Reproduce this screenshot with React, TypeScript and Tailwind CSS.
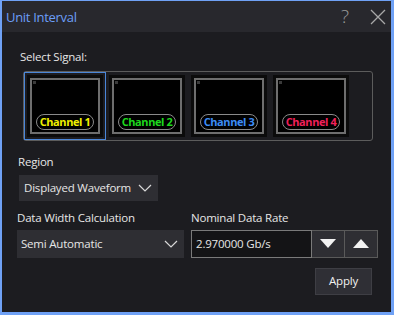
import React from 'react';

const channels = [
  { name: 'Channel 1', color: 'text-[#f0f000]' },
  { name: 'Channel 2', color: 'text-[#1ed81e]' },
  { name: 'Channel 3', color: 'text-[#3d8cf5]' },
  { name: 'Channel 4', color: 'text-[#f0205a]' },
];

function Chevron({ className }: { className?: string }) {
  return (
    <svg width="14" height="8" viewBox="0 0 14 8" className={className}>
      <path d="M1 1 L7 7 L13 1" fill="none" stroke="#d8d8d8" strokeWidth="1.2" />
    </svg>
  );
}

function Tile({ name, color, selected }: { name: string; color: string; selected?: boolean }) {
  return (
    <div className={`w-[82px] h-[68px] p-[2px] border shrink-0 ${selected ? 'border-[#4a86d8]' : 'border-transparent'}`}>
      <div className="w-full h-full bg-[#0b0b0b] p-[3px]">
        <div className="relative w-full h-full bg-black border-2 border-[#6e6e6e] flex flex-col justify-end items-center pb-[2px]">
          <div className="absolute left-[1px] top-[1px] w-[3px] h-[3px] bg-[#3a3a3a]" />
          <div className={`h-[16px] px-[3px] rounded-full border-[1.5px] border-[#8a8a8a] bg-black flex items-center whitespace-nowrap text-[11px] tracking-[-0.4px] font-bold leading-none ${color}`}>
            {name}
          </div>
        </div>
      </div>
    </div>
  );
}

export default function App() {
  return (
    <div
      className="w-[394px] h-[315px] bg-[#1c1c20] border-t border-l-2 border-r-[3px] border-b-[3px] border-[#6fa1f5] flex flex-col text-[#e6e6e6] whitespace-nowrap"
      style={{ fontFamily: '"Open Sans", "Noto Sans", sans-serif' }}
    >
      {/* title bar */}
      <div className="h-[31px] bg-[#28282d] flex items-center pl-[4px] pr-[5px] shrink-0">
        <span className="text-[13px] text-[#6c9ef8] tracking-[-0.3px] mt-[2px]">Unit Interval</span>
        <span className="ml-auto text-[19px] font-light text-[#9a9a9a] leading-none mr-[21px]">?</span>
        <svg width="16" height="16" viewBox="0 0 16 16">
          <path d="M1 1 L15 15 M15 1 L1 15" stroke="#a8a8a8" strokeWidth="1.3" />
        </svg>
      </div>

      <div className="flex flex-col text-[11.5px] tracking-[-0.2px] leading-none">
        <div className="ml-[18px] mt-[19px]">Select Signal:</div>

        <div className="ml-[21px] mt-[8px] w-[350px] h-[70px] border border-[#5c5c5c] rounded-[3px] flex">
          {channels.map((c, i) => (
            <Tile key={c.name} name={c.name} color={c.color} selected={i === 0} />
          ))}
        </div>

        <div className="ml-[16px] mt-[15px]">Region</div>
        <div className="ml-[17px] mt-[8px] w-[139px] h-[26px] bg-[#2e2e33] flex items-center pl-[5px] pr-[6px]">
          <span>Displayed Waveform</span>
          <Chevron className="ml-auto shrink-0" />
        </div>

        <div className="flex mt-[11px] ml-[15px]">
          <div className="flex flex-col">
            <div>Data Width Calculation</div>
            <div className="mt-[6px] w-[167px] h-[28px] bg-[#2e2e33] flex items-center pl-[4px] pr-[6px]">
              <span>Semi Automatic</span>
              <Chevron className="ml-auto shrink-0" />
            </div>
          </div>
          <div className="flex flex-col ml-[7px]">
            <div>Nominal Data Rate</div>
            <div className="mt-[6px] flex h-[28px]">
              <div className="w-[121px] h-full bg-[#141416] border border-[#7a7a7a] flex items-center pl-[4px]">
                2.970000 Gb/s
              </div>
              <div className="w-[33px] h-full bg-[#2e2e33] border border-[#5a5a5a] border-l-0 flex items-center justify-center">
                <svg width="16" height="9" viewBox="0 0 16 9">
                  <path d="M0 0 L16 0 L8 9 Z" fill="#f2f2f2" />
                </svg>
              </div>
              <div className="w-[33px] h-full bg-[#2e2e33] border border-[#5a5a5a] border-l-0 flex items-center justify-center">
                <svg width="16" height="9" viewBox="0 0 16 9">
                  <path d="M0 9 L16 9 L8 0 Z" fill="#f2f2f2" />
                </svg>
              </div>
            </div>
          </div>
        </div>

        <div className="flex justify-end mt-[10px] mr-[19px]">
          <div className="w-[57px] h-[27px] bg-[#2f2f35] border border-[#3e3e44] flex items-center justify-center text-[#f2f2f2]">
            Apply
          </div>
        </div>
      </div>
    </div>
  );
}
